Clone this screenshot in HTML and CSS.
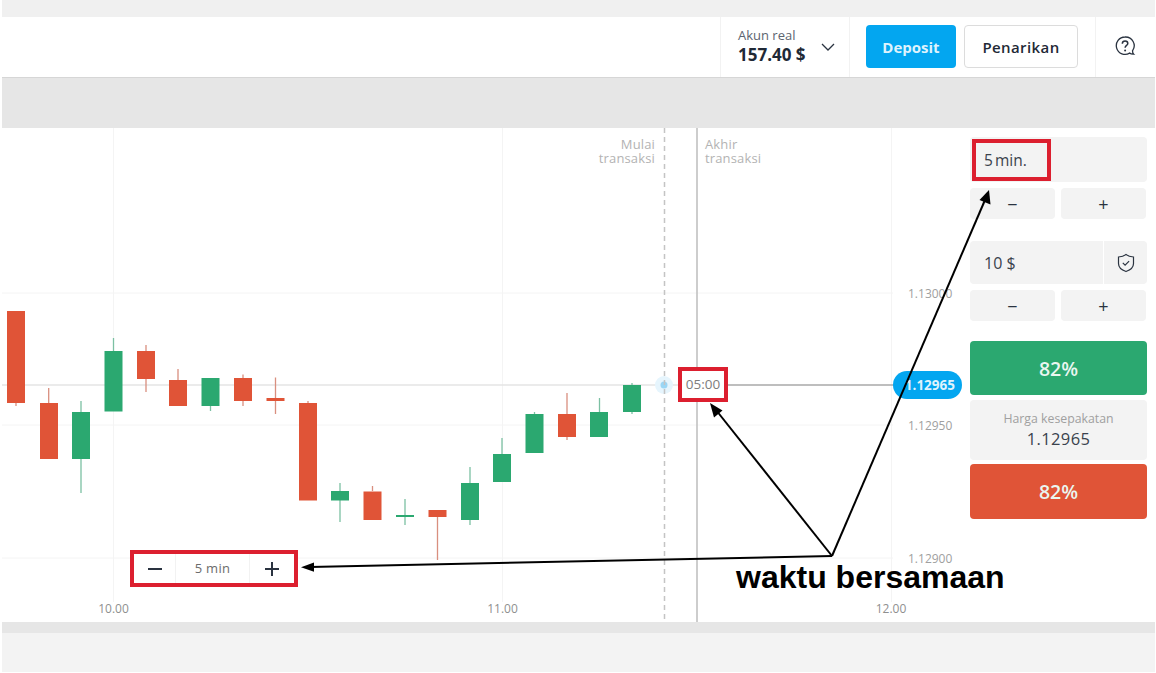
FILE: index.html
```html
<!DOCTYPE html>
<html lang="id">
<head>
<meta charset="utf-8">
<title>Akun real</title>
<link rel="stylesheet" href="styles.css">
</head>
<body>
<div class="page">
  <div class="top-strip"></div>
  <header class="header">
    <div class="account">
      <div class="account-text">
        <span class="account-label">Akun real</span>
        <span class="account-value">157.40 $</span>
      </div>
      <svg class="chevron" width="14" height="8" viewBox="0 0 14 8"><path d="M1 1l6 6 6-6" fill="none" stroke="#2a3340" stroke-width="1.3"/></svg>
    </div>
    <div class="actions">
      <button class="btn btn-deposit">Deposit</button>
      <button class="btn btn-withdraw">Penarikan</button>
    </div>
    <div class="help">
      <svg width="22" height="22" viewBox="0 0 22 22"><path d="M11 2a8.7 8.7 0 1 0 4.6 16.1c1 .9 2.300 1.200 4.100 1.100-.9-.8-1.200-1.900-1.200-3.400A8.700 8.700 0 0 0 11 2z" fill="none" stroke="#2a3340" stroke-width="1.300"/><path d="M8.300 8.700c.1-1.600 1.200-2.600 2.800-2.600 1.500 0 2.700 1 2.700 2.300 0 2-2.700 2-2.700 4.300" fill="none" stroke="#2a3340" stroke-width="1.500"/><circle cx="11.100" cy="15.500" r="1" fill="#2a3340"/></svg>
    </div>
  </header>
  <div class="band-tools"></div>
  <main class="main">
    <section class="chart">
      <svg class="chart-canvas" width="968" height="494" viewBox="2 128 968 494">
        <g class="grid">
          <path d="M2 293H893M2 425H893M2 558H893M113.500 128V602M502.500 128V602M891.500 128V602"/>
        </g>
        <path class="price-line" d="M2 385H680"/>
        <path class="price-line-dark" d="M728 385H895"/>
        <circle class="halo" cx="664" cy="385" r="9"/>
        <circle class="dot" cx="664" cy="385" r="3.500"/>
        <path class="start-line" d="M664.500 128V622"/>
        <path class="end-line" d="M697 128V622"/>
        <g class="wick-red">
          <path d="M16 403V406M48.700 388V403M146 345V392M178 369V380M243 374.500V406M275.500 377.500V414M308 401V403M372.500 486V491M437.500 517V560M567 393V440"/>
        </g>
        <g class="wick-green">
          <path d="M81 401V493M113.500 338V351M210.500 406V411M340 483V522M405 499V525M470 467V525M502 438V454M534.500 412V414M599.500 398V412M632 383V414"/>
        </g>
        <g class="red">
          <rect x="7" y="311" width="18" height="92"/>
          <rect x="40" y="403" width="18" height="56"/>
          <rect x="137" y="351" width="18" height="28"/>
          <rect x="169" y="380" width="18" height="26"/>
          <rect x="234" y="378" width="18" height="23"/>
          <rect x="266.500" y="398" width="18" height="3"/>
          <rect x="299" y="403" width="18" height="97.500"/>
          <rect x="363.500" y="491.500" width="18" height="28.500"/>
          <rect x="428.500" y="510" width="18" height="7"/>
          <rect x="558" y="414" width="18" height="23"/>
        </g>
        <g class="green">
          <rect x="72" y="412" width="18" height="47"/>
          <rect x="104.500" y="351" width="18" height="60.500"/>
          <rect x="201.500" y="378" width="18" height="28"/>
          <rect x="331" y="491" width="18" height="9.500"/>
          <rect x="396" y="515" width="18" height="2"/>
          <rect x="461" y="483" width="18" height="37"/>
          <rect x="493" y="454" width="18" height="28"/>
          <rect x="525.500" y="414" width="18" height="39"/>
          <rect x="590" y="412" width="18" height="25"/>
          <rect x="623" y="385" width="18" height="27"/>
        </g>
      </svg>
      <div class="tx-label tx-start">Mulai<br>transaksi</div>
      <div class="tx-label tx-end">Akhir<br>transaksi</div>
      <span class="axis-y y-1">1.13000</span>
      <span class="axis-y y-2">1.12950</span>
      <span class="axis-y y-3">1.12900</span>
      <span class="axis-x x-1">10.00</span>
      <span class="axis-x x-2">11.00</span>
      <span class="axis-x x-3">12.00</span>
      <span class="price-pill">1.12965</span>
      <div class="timer hl">05:00</div>
      <div class="stepper hl">
        <span class="step-btn step-minus"><svg width="14" height="14" viewBox="0 0 14 14"><path d="M0 7H14" stroke="#2a3340" stroke-width="2"/></svg></span>
        <span class="step-value">5 min</span>
        <span class="step-btn step-plus"><svg width="14" height="14" viewBox="0 0 14 14"><path d="M0 7H14M7 0V14" stroke="#2a3340" stroke-width="2"/></svg></span>
      </div>
    </section>
    <aside class="panel">
      <div class="field field-time">
        <span class="time-box hl">5<span class="unit">min.</span></span>
      </div>
      <div class="pair">
        <button class="mini">−</button>
        <button class="mini">+</button>
      </div>
      <div class="field field-amount">
        <span class="amount">10 $</span>
        <span class="shield">
          <svg width="18" height="20" viewBox="0 0 18 20"><path d="M9 1.500c2 1.500 4.500 2.300 7.500 2.500v6.500c0 3.500-3 6.500-7.500 8-4.500-1.500-7.500-4.500-7.500-8V4C4.500 3.800 7 3 9 1.500z" fill="none" stroke="#2a3340" stroke-width="1.200"/><path d="M5.800 9.800l2.300 2.300 4-4" fill="none" stroke="#2a3340" stroke-width="1.200"/></svg>
        </span>
      </div>
      <div class="pair">
        <button class="mini">−</button>
        <button class="mini">+</button>
      </div>
      <button class="trade trade-up">82%</button>
      <div class="quote">
        <span class="quote-label">Harga kesepakatan</span>
        <span class="quote-value">1.12965</span>
      </div>
      <button class="trade trade-down">82%</button>
    </aside>
  </main>
  <div class="band-bottom"></div>
  <div class="footer"></div>
</div>
<svg class="arrows" width="1156" height="673" viewBox="0 0 1156 673">
  <g class="arrow-lines">
    <path d="M832 556L310 567"/>
    <path d="M832 556L716 410"/>
    <path d="M832 556L985 200"/>
  </g>
  <path d="M301 567.200L314 562.500V571.800z"/>
  <path d="M710 403L722.500 410.500L714 417.500z"/>
  <path d="M989 190L990.500 204.500L979.500 200z"/>
</svg>
<div class="caption">waktu bersamaan</div>
</body>
</html>
```

FILE: styles.css
```css
* { box-sizing: border-box; }
html, body { margin: 0; padding: 0; background: #fff; }
body {
  width: 1156px;
  height: 673px;
  overflow: hidden;
  position: relative;
  font-family: "Open Sans", "Noto Sans", sans-serif;
  color: #2a3340;
}
button { font-family: inherit; border: 0; padding: 0; }
.page {
  width: 1156px;
  height: 673px;
  padding: 0 1px 1px 2px;
  display: flex;
  flex-direction: column;
}
.top-strip { height: 17px; background: #f0f0f0; flex: none; }

.header {
  height: 61px;
  flex: none;
  display: flex;
  justify-content: flex-end;
  background: #fff;
  border-bottom: 1px solid #d6d6d6;
}
.account {
  width: 130px;
  display: flex;
  align-items: center;
  gap: 15px;
  padding: 0 0 0 17px;
  border-left: 1px solid #f2f2f2;
  border-right: 1px solid #f2f2f2;
}
.account-text { display: flex; flex-direction: column; }
.account-label { font-size: 13px; line-height: 14px; margin-bottom: 2px; color: #5c6470; }
.account-value { font-size: 17px; line-height: 22px; font-weight: 700; color: #1f2936; }
.chevron { margin-top: 0; }
.actions {
  width: 246px;
  display: flex;
  align-items: flex-start;
  gap: 8px;
  padding: 8px 0 0 16px;
  border-right: 1px solid #f2f2f2;
}
.btn { height: 43px; border-radius: 4px; font-size: 15px; }
.btn-deposit { width: 90px; background: #03a6f0; color: #dff3fd; font-weight: 700; }
.btn-withdraw { width: 114px; background: #fff; border: 1px solid #dcdcdc; color: #1f2936; font-weight: 600; letter-spacing: .4px; }
.help { width: 59px; display: flex; align-items: center; justify-content: center; padding: 0 2px 2px 0; }

.band-tools { height: 50px; flex: none; background: #e6e6e6; }

.main { height: 494px; flex: none; display: flex; background: #fff; }
.chart { width: 968px; flex: none; position: relative; }
.chart-canvas { position: absolute; left: 0; top: 0; display: block; }
.grid path { stroke: #f4f4f4; stroke-width: 1; fill: none; }
.price-line { stroke: #e4e4e4; stroke-width: 1.500; fill: none; }
.price-line-dark { stroke: #a8a8a8; stroke-width: 1.500; fill: none; }
.start-line { stroke: #c4c4c4; stroke-width: 1.500; stroke-dasharray: 5 4; fill: none; }
.end-line { stroke: #bdbdbd; stroke-width: 1.500; fill: none; }
.halo { fill: #e6f5fd; }
.dot { fill: #9bd6f4; }
.red { fill: #e05437; }
.green { fill: #2ba870; }
.wick-red path { stroke: #d98f7f; stroke-width: 1.300; fill: none; }
.wick-green path { stroke: #7cc0a3; stroke-width: 1.300; fill: none; }

.tx-label { position: absolute; top: 9px; font-size: 13px; line-height: 14px; color: #b3b3b3; letter-spacing: .15px; }
.tx-start { right: 315px; text-align: right; }
.tx-end { left: 703px; }
.axis-y, .axis-x { position: absolute; font-size: 12px; line-height: 16px; color: #a0a0a0; }
.axis-y { left: 906px; }
.y-1 { top: 158px; }
.y-2 { top: 290px; }
.y-3 { top: 423px; }
.axis-x { top: 473px; transform: translateX(-50%); color: #8f8f8f; }
.x-1 { left: 111.500px; }
.x-2 { left: 500.500px; }
.x-3 { left: 889px; }

.price-pill {
  position: absolute;
  left: 891px;
  top: 243px;
  width: 69px;
  height: 28px;
  border-radius: 14px;
  background: #03a6f0;
  color: #dff3fd;
  font-size: 13.500px;
  font-weight: 700;
  line-height: 28px;
  text-align: right;
  padding-right: 7px;
}
.hl { border: 4px solid #dc1f2f; }
.timer {
  position: absolute;
  left: 676px;
  top: 239px;
  width: 50px;
  height: 35px;
  background: #fff;
  color: #7d7d7d;
  font-size: 13.500px;
  line-height: 27px;
  text-align: center;
}
.stepper {
  position: absolute;
  left: 128px;
  top: 422px;
  width: 168px;
  height: 37px;
  background: #fff;
  display: flex;
}
.step-btn { display: flex; align-items: center; justify-content: center; flex: none; }
.step-minus { width: 41px; }
.step-plus { width: 44px; }
.step-value {
  flex: 1;
  border-left: 1px solid #f2f2f2;
  border-right: 1px solid #f2f2f2;
  font-size: 13px;
  line-height: 29px;
  text-align: center;
  color: #6c6c6c;
  letter-spacing: .3px;
}

.panel { width: 177px; flex: none; padding-top: 9px; display: flex; flex-direction: column; }
.field { background: #f3f3f3; border-radius: 4px; display: flex; }
.field-time { height: 45px; align-items: flex-start; padding: 2px 0 0 2px; }
.time-box {
  width: 79px;
  height: 42px;
  font-size: 15.500px;
  line-height: 34px;
  padding-left: 8px;
  color: #3a424d;
}
.unit { margin-left: 2px; }
.pair { display: flex; gap: 6px; margin-top: 6px; padding-right: 1px; }
.mini {
  flex: 1;
  height: 31px;
  border-radius: 4px;
  background: #f3f3f3;
  color: #2a3340;
  font-size: 18px;
}
.field-amount { height: 43px; margin-top: 22px; align-items: center; }
.amount { flex: 1; padding-left: 14px; font-size: 16px; color: #3a424d; align-self: center; }
.shield {
  width: 44px;
  height: 100%;
  border-left: 1px solid #fff;
  display: flex;
  align-items: center;
  justify-content: center;
}
.trade {
  height: 54px;
  border-radius: 4px;
  color: #eaf6f0;
  font-size: 19.500px;
  font-weight: 600;
  flex: none;
  padding-top: 1px;
}
.trade-up { background: #2ba870; margin-top: 20px; }
.trade-down { background: #e05437; margin-top: 4px; height: 55px; padding-top: 0; }
.quote {
  height: 60px;
  margin-top: 5px;
  background: #f3f3f3;
  border-radius: 4px;
  display: flex;
  flex-direction: column;
  align-items: center;
  padding-top: 10px;
}
.quote-label { font-size: 12.300px; line-height: 17px; color: #a0a0a0; }
.quote-value { font-size: 16.500px; line-height: 24px; color: #3a424d; letter-spacing: .4px; }

.band-bottom { height: 11px; flex: none; background: #e6e6e6; }
.footer { flex: 1; background: #f3f3f3; }

.arrows { position: absolute; left: 0; top: 0; pointer-events: none; fill: #000; }
.arrow-lines path { stroke: #000; stroke-width: 2; fill: none; }
.caption {
  position: absolute;
  left: 736px;
  top: 558px;
  font-family: "Liberation Sans", Arial, sans-serif;
  font-weight: 700;
  font-size: 32px;
  line-height: 38px;
  color: #000;
  white-space: nowrap;
}
```
